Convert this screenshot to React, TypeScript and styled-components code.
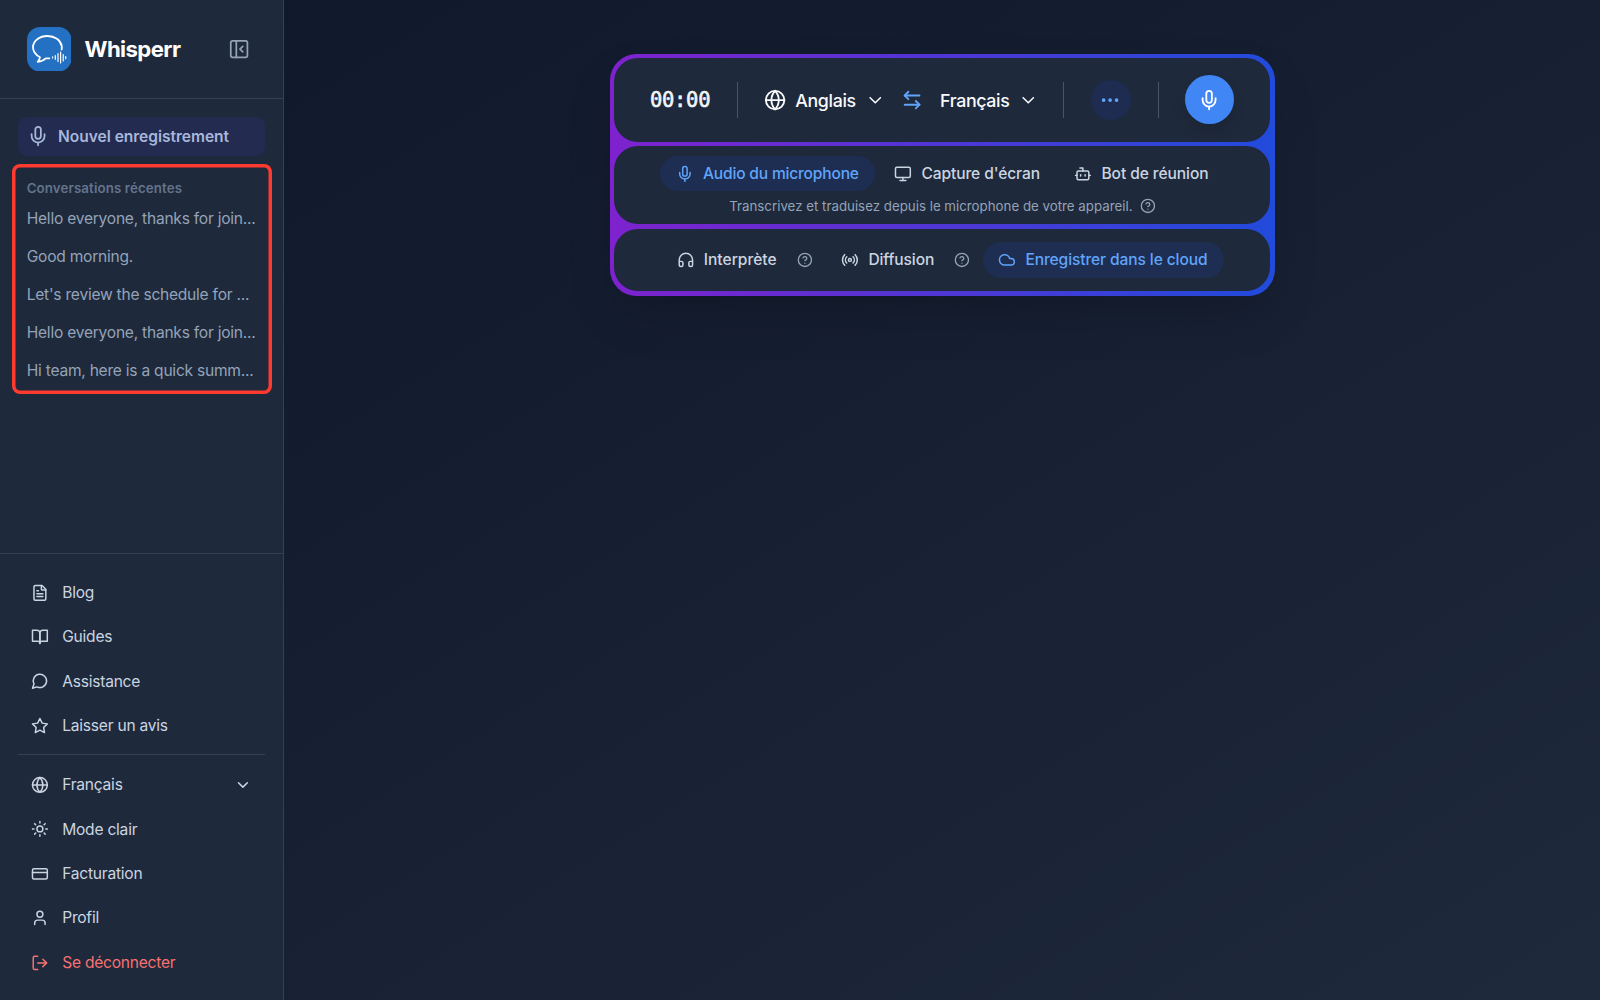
import React from 'react';
import styled, { createGlobalStyle, css } from 'styled-components';
import {
  Mic, PanelLeftClose, FileText, Globe, ChevronDown, Sun, CreditCard, User, LogOut,
  ArrowLeftRight, Ellipsis, Monitor, Bot, CircleHelp, Headphones, Radio, Cloud,
} from 'lucide-react';

const Global = createGlobalStyle`
  *, *::before, *::after { box-sizing: border-box; }
  html, body, #root { height: 100%; }
  body { margin: 0; font-family: Inter, "Liberation Sans", sans-serif; font-size: 15.55px; color: #cbd5e1; }
  button { font: inherit; color: inherit; background: none; border: 0; padding: 0; margin: 0; }
  svg { display: block; flex: none; }
`;

const Page = styled.div`
  display: flex;
  height: 100vh;
  overflow: hidden;
  background: linear-gradient(to bottom right, #0f172a, #1e293b);
`;

const Sidebar = styled.aside`
  display: flex;
  flex-direction: column;
  flex: none;
  width: 284px;
  background: #1e293b;
  border-right: 1px solid #334155;
`;

const Header = styled.header`
  display: flex;
  align-items: center;
  height: 99px;
  padding: 0 33px 0 26.7px;
  border-bottom: 1px solid #334155;
`;

const Title = styled.h1`
  margin: 0 auto 0 13.3px;
  padding-bottom: 2px;
  font-size: 22.2px;
  font-weight: 700;
  color: #fff;
  letter-spacing: -0.6px;
`;

const Collapse = styled.button`
  color: #94a3b8;
`;

const NewRecord = styled.button`
  display: flex;
  align-items: center;
  gap: 9.3px;
  height: 39px;
  margin: 18px 18px 0;
  padding-left: 8.6px;
  flex: none;
  border-radius: 9px;
  background: #232b50;
  color: #a8b7dc;
  font-size: 15.55px;
  font-weight: 600;
  letter-spacing: -0.03px;
`;

const Recent = styled.section`
  display: flex;
  flex-direction: column;
  flex: none;
  margin: 8.3px 11px 0 12px;
  height: 229.5px;
  padding: 14.6px 12px 0 14.7px;
  box-shadow: inset 0 0 0 3.5px #ff3b30;
  border-radius: 8px;
`;

const RecentTitle = styled.h2`
  margin: 0 0 3.5px;
  height: 19px;
  line-height: 19px;
  font-size: 13.3px;
  font-weight: 600;
  letter-spacing: 0.12px;
  color: #64748b;
`;

const Conversation = styled.a`
  flex: none;
  height: 37.8px;
  line-height: 37.8px;
  white-space: nowrap;
  color: #94a3b8;
  letter-spacing: -0.23px;
  &:first-of-type { margin-top: -1px; }
`;

const Footer = styled.nav`
  display: flex;
  flex-direction: column;
  height: 447px;
  margin-top: auto;
  padding: 16.3px 18px 0;
  border-top: 1px solid #334155;
`;

const NavItem = styled.a<{ $danger?: boolean }>`
  display: flex;
  align-items: center;
  flex: none;
  gap: 13.4px;
  height: 44.45px;
  padding: 0 13px;
  color: ${(p) => (p.$danger ? '#f87171' : '#cbd5e1')};
  letter-spacing: -0.22px;
  svg:last-child:not(:first-child) { margin-left: auto; }
`;

const Rule = styled.hr`
  flex: none;
  width: 100%;
  height: 1px;
  margin: 6.3px 0 7.1px;
  border: 0;
  background: #334155;
`;

const Main = styled.main`
  flex: 1;
  display: flex;
  justify-content: center;
  align-items: flex-start;
  padding: 53.5px 0 0 0.5px;
`;

const Panel = styled.div`
  display: flex;
  flex-direction: column;
  gap: 4.4px;
  width: 664.5px;
  height: 242.2px;
  padding: 4.4px;
  border-radius: 26.7px;
  background: linear-gradient(to right, #7e22ce, #214bdb);
  box-shadow: 0 24px 50px -10px rgba(0, 0, 0, 0.22);
`;

const Row = styled.div<{ $h: number; $column?: boolean }>`
  display: flex;
  flex: none;
  align-items: center;
  height: ${(p) => p.$h}px;
  border-radius: 24px;
  background: #1e293b;
  ${(p) => p.$column && css`flex-direction: column; padding-top: 9.3px;`}
`;

const Timer = styled.span`
  width: 86.7px;
  margin-left: 35.6px;
  font-family: "DejaVu Sans Mono", monospace;
  font-size: 20.5px;
  letter-spacing: -0.3px;
  -webkit-text-stroke: 0.6px #f1f5f9;
  color: #f1f5f9;
`;

const Divider = styled.span<{ $ml?: number }>`
  width: 1px;
  height: 35.5px;
  margin-left: ${(p) => p.$ml ?? 0}px;
  background: #475569;
`;

const Language = styled.button<{ $ml: number; $w: number }>`
  display: flex;
  align-items: center;
  gap: 9px;
  width: ${(p) => p.$w}px;
  margin-left: ${(p) => p.$ml}px;
  padding-top: 0.6px;
  font-size: 17.8px;
  font-weight: 500;
  color: #f8fafc;
  letter-spacing: -0.35px;
  svg:last-child { margin-left: auto; }
`;

const Swap = styled.button`
  margin-left: 17px;
  color: #60a5fa;
`;

const Round = styled.button<{ $size: number; $ml: number; $solid?: boolean }>`
  display: grid;
  place-items: center;
  flex: none;
  width: ${(p) => p.$size}px;
  height: ${(p) => p.$size}px;
  margin-left: ${(p) => p.$ml}px;
  border-radius: 50%;
  background: ${(p) => (p.$solid ? '#4086f4' : '#1e2c52')};
  color: ${(p) => (p.$solid ? '#fff' : '#60a5fa')};
  ${(p) => p.$solid && css`box-shadow: 0 8px 14px rgba(0, 0, 0, 0.1);`}
`;

const Modes = styled.div`
  display: flex;
  gap: 4.1px;
`;

const Pill = styled.button<{ $active?: boolean; $w: number; $ml?: number; $ls?: number }>`
  display: flex;
  align-items: center;
  flex: none;
  gap: 9.3px;
  width: ${(p) => p.$w}px;
  height: 35.5px;
  margin-left: ${(p) => p.$ml ?? 0}px;
  padding-left: 15.7px;
  border-radius: 18px;
  white-space: nowrap;
  font-weight: 500;
  background: ${(p) => (p.$active ? '#1e2d52' : 'transparent')};
  color: ${(p) => (p.$active ? '#60a5fa' : '#cbd5e1')};
  letter-spacing: ${(p) => p.$ls ?? 0}px;
`;

const Hint = styled.p`
  display: flex;
  align-items: center;
  gap: 7px;
  margin: 6px 0 0;
  font-size: 13.3px;
  line-height: 18px;
  color: #94a3b8;
`;

const Help = styled.span`
  display: flex;
  color: #94a3b8;
  margin-right: 13.2px;
`;

const Logo = () => (
  <svg width="44.5" height="44.5" viewBox="0 0 44.5 44.5" fill="none" stroke="#fff" strokeLinecap="round" strokeLinejoin="round">
    <rect width="44.5" height="44.5" rx="13" fill="#2470c2" stroke="none" />
    <path d="M34.6 22.5c.3-1.2.3-2.3.1-3.5C33.6 12.9 27.8 9 20.4 9 12.5 9 6 13.9 6 20.3c0 4.1 2.6 7.6 7 9.900-.3 2-1 3.400-2.300 4.700 3.300-.3 6.200-1.700 8-3.500 1.200.1 2.300.1 3.600-.1" strokeWidth="1.8" />
    <path d="M25.6 29.8v1.200M28.300 28.500v3.800M31 26.500v8M33.600 25v11M36.200 27.500v6.500M38.700 29.500v2.200" strokeWidth="1.2" />
  </svg>
);

const outline = {
  width: 17.8, height: 17.8, viewBox: '0 0 24 24', fill: 'none', stroke: 'currentColor',
  strokeWidth: 2, strokeLinecap: 'round', strokeLinejoin: 'round',
} as const;

const BookIcon = () => (
  <svg {...outline}>
    <path d="M2 3h6a4 4 0 0 1 4 4v14a3 3 0 0 0-3-3H2z" />
    <path d="M22 3h-6a4 4 0 0 0-4 4v14a3 3 0 0 1 3-3h7z" />
  </svg>
);

const ChatIcon = () => (
  <svg {...outline}>
    <path d="M7.9 20A9 9 0 1 0 4 16.1L2 22Z" />
  </svg>
);

const StarIcon = () => (
  <svg {...outline}>
    <polygon points="12 2 15.09 8.26 22 9.27 17 14.14 18.18 21.02 12 17.77 5.82 21.02 7 14.14 2 9.27 8.91 8.26 12 2" />
  </svg>
);

const conversations = [
  'Hello everyone, thanks for join...',
  'Good morning.',
  "Let's review the schedule for ...",
  'Hello everyone, thanks for join...',
  'Hi team, here is a quick summ...',
];

export default function App() {
  return (
    <>
      <Global />
      <Page>
        <Sidebar>
          <Header>
            <Logo />
            <Title>Whisperr</Title>
            <Collapse><PanelLeftClose size={22.2} strokeWidth={1.9} /></Collapse>
          </Header>
          <NewRecord><Mic size={22.2} strokeWidth={1.9} />Nouvel enregistrement</NewRecord>
          <Recent>
            <RecentTitle>Conversations récentes</RecentTitle>
            {conversations.map((text, i) => <Conversation key={i}>{text}</Conversation>)}
          </Recent>
          <Footer>
            <NavItem><FileText size={17.8} />Blog</NavItem>
            <NavItem><BookIcon />Guides</NavItem>
            <NavItem><ChatIcon />Assistance</NavItem>
            <NavItem><StarIcon />Laisser un avis</NavItem>
            <Rule />
            <NavItem><Globe size={17.8} />Français<ChevronDown size={17.8} /></NavItem>
            <NavItem><Sun size={17.8} />Mode clair</NavItem>
            <NavItem><CreditCard size={17.8} />Facturation</NavItem>
            <NavItem><User size={17.8} />Profil</NavItem>
            <NavItem $danger><LogOut size={17.8} />Se déconnecter</NavItem>
          </Footer>
        </Sidebar>
        <Main>
          <Panel>
            <Row $h={84.2}>
              <Timer>00:00</Timer>
              <Divider />
              <Language $ml={26.4} $w={119.5}><Globe size={22.2} />Anglais<ChevronDown size={20.5} strokeWidth={1.8} /></Language>
              <Swap><ArrowLeftRight size={22.2} /></Swap>
              <Language $ml={17.3} $w={97}>Français<ChevronDown size={20.5} strokeWidth={1.8} /></Language>
              <Divider $ml={26} />
              <Round $size={40} $ml={26.5}><Ellipsis size={22.2} /></Round>
              <Divider $ml={27} />
              <Round $size={49} $ml={26.5} $solid><Mic size={22.2} /></Round>
            </Row>
            <Row $h={77.8} $column>
              <Modes>
                <Pill $active $w={214.3} $ls={-0.18}><Mic size={17.8} />Audio du microphone</Pill>
                <Pill $w={176} $ls={-0.09}><Monitor size={17.8} />Capture d'écran</Pill>
                <Pill $w={165.6} $ls={-0.08}><Bot size={17.8} />Bot de réunion</Pill>
              </Modes>
              <Hint>Transcrivez et traduisez depuis le microphone de votre appareil.<CircleHelp size={15.8} /></Hint>
            </Row>
            <Row $h={62.4}>
              <Pill $ml={46.6} $w={135.7}><Headphones size={17.8} />Interprète</Pill>
              <Help><CircleHelp size={15.8} /></Help>
              <Pill $w={128} $ls={-0.1}><Radio size={17.8} />Diffusion</Pill>
              <Help><CircleHelp size={15.8} /></Help>
              <Pill $active $w={241} $ls={-0.1}><Cloud size={17.8} />Enregistrer dans le cloud</Pill>
            </Row>
          </Panel>
        </Main>
      </Page>
    </>
  );
}
